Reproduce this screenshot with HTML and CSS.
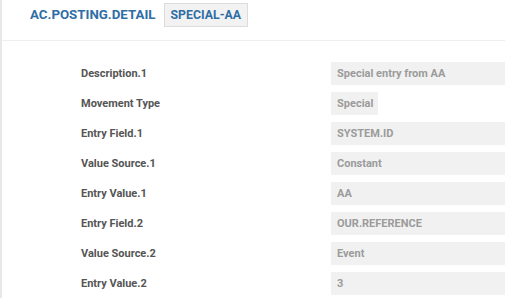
FILE: index.html
```html
<!DOCTYPE html>
<html>
<head>
<meta charset="utf-8">
<link rel="stylesheet" href="styles.css">
</head>
<body>
<div class="page">
  <div class="header">
    <span class="title">AC.POSTING.DETAIL</span>
    <span class="badge">SPECIAL-AA</span>
  </div>
  <div class="form">
    <div class="row"><div class="label">Description.1</div><div class="value">Special entry from AA</div></div>
    <div class="row"><div class="label">Movement Type</div><div class="value inline">Special</div></div>
    <div class="row"><div class="label">Entry Field.1</div><div class="value">SYSTEM.ID</div></div>
    <div class="row"><div class="label">Value Source.1</div><div class="value">Constant</div></div>
    <div class="row"><div class="label">Entry Value.1</div><div class="value">AA</div></div>
    <div class="row"><div class="label">Entry Field.2</div><div class="value">OUR.REFERENCE</div></div>
    <div class="row"><div class="label">Value Source.2</div><div class="value">Event</div></div>
    <div class="row"><div class="label">Entry Value.2</div><div class="value">3</div></div>
  </div>
</div>
</body>
</html>
```
FILE: styles.css
```css
html, body {
  margin: 0;
  padding: 0;
  background: #fff;
  font-family: Roboto, "Liberation Sans", sans-serif;
}
.page {
  border-left: 2px solid #e8e8e8;
  min-height: 298px;
  box-sizing: border-box;
}
.header {
  display: flex;
  align-items: flex-start;
  gap: 8px;
  height: 41px;
  padding: 3px 0 0 28px;
  box-sizing: border-box;
  border-bottom: 1px solid #eeeeee;
}
.title {
  font-size: 13.3px;
  font-weight: 700;
  color: #2f6ea5;
  line-height: 24px;
}
.badge {
  font-size: 12.3px;
  font-weight: 700;
  color: #2f6ea5;
  background: #f2f2f2;
  border: 1px solid #dcdcdc;
  padding: 0 6px;
  line-height: 22px;
}
.form {
  padding: 21px 0 0 79px;
  display: flex;
  flex-direction: column;
  gap: 7px;
}
.row {
  display: grid;
  grid-template-columns: 250px 1fr;
  align-items: center;
}
.label {
  font-size: 11px;
  font-weight: 700;
  color: #555;
}
.value {
  font-size: 11px;
  font-weight: 700;
  color: #9b9b9b;
  background: #f1f1f1;
  height: 23px;
  line-height: 23px;
  padding-left: 6px;
}
.inline {
  justify-self: start;
  padding-right: 5px;
}
```
